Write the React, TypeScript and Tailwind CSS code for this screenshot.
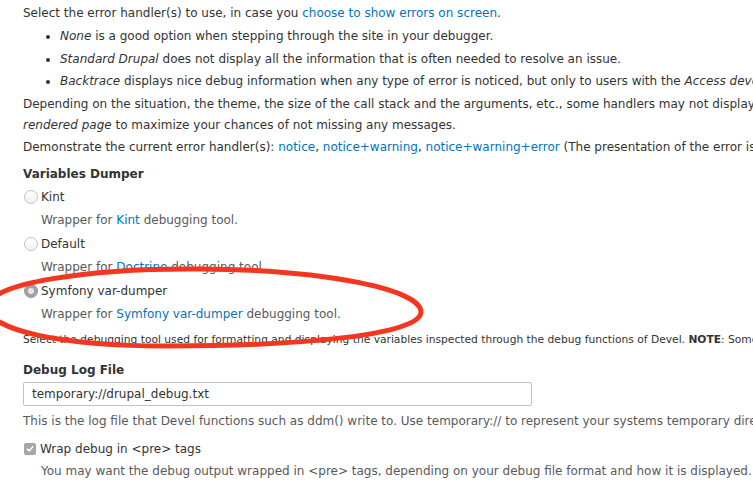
import React from "react"

const link = "text-[#0074bd]"

const Radio = ({ checked }: { checked?: boolean }) =>
  checked ? (
    <span className="w-[14px] h-[14px] rounded-full bg-[#a3a3a3] border border-[#9a9a9a] flex items-center justify-center shrink-0">
      <span className="w-[6px] h-[6px] rounded-full bg-[#e6e6e6]" />
    </span>
  ) : (
    <span className="w-[14px] h-[14px] rounded-full bg-gradient-to-b from-white to-[#f0f0f0] border border-[#c4c4c4] shrink-0" />
  )

const Checkbox = () => (
  <span className="w-[12px] h-[12px] rounded-[2px] bg-[#a6a6a6] flex items-center justify-center shrink-0">
    <svg width="8" height="8" viewBox="0 0 8 8">
      <path d="M1.3 4.2 L3.2 6 L6.8 1.8" fill="none" stroke="#fff" strokeWidth="1.6" strokeLinecap="round" strokeLinejoin="round" />
    </svg>
  </span>
)

const Option = ({ label, tool, checked }: { label: string; tool: string; checked?: boolean }) => (
  <div>
    <div className="flex items-center h-[22px] pl-[1px] gap-[3px] text-[#333]">
      <Radio checked={checked} />
      <span>{label}</span>
    </div>
    <div className="pl-[18px] mt-[1px] leading-[22px] text-[#595959]">
      Wrapper for <span className={link}>{tool}</span> debugging tool.
    </div>
  </div>
)

export default function App() {
  return (
    <div
      className="relative w-[753px] h-[483px] overflow-hidden bg-white text-[12px] text-[#333]"
      style={{ fontFamily: '"DejaVu Sans", Verdana, sans-serif' }}
    >
      <div className="w-[1100px] pl-[23px] pt-[2px] whitespace-nowrap">
        <p className="leading-[22px]">
          Select the error handler(s) to use, in case you <span className={link}>choose to show errors on screen</span>.
        </p>
        <ul className="list-disc pl-[37px] mt-[1px] leading-[22.5px]">
          <li>
            <em>None</em> is a good option when stepping through the site in your debugger.
          </li>
          <li>
            <em>Standard Drupal</em> does not display all the information that is often needed to resolve an issue.
          </li>
          <li>
            <em>Backtrace</em> displays nice debug information when any type of error is noticed, but only to users with the{" "}
            <em>Access devel information</em> permission.
          </li>
        </ul>
        <p className="leading-[21.5px] mt-[1px]">
          Depending on the situation, the theme, the size of the call stack and the arguments, etc., some handlers may not display their messages, or display them on the subsequent page. Select <em>Standard Drupal</em> to view all messages on the
          <br />
          <em>rendered page</em> to maximize your chances of not missing any messages.
          <br />
          Demonstrate the current error handler(s): <span className={link}>notice</span>, <span className={link}>notice+warning</span>,{" "}
          <span className={link}>notice+warning+error</span> (The presentation of the error is determined by PHP.)
        </p>

        <h3 className="font-bold leading-[22px] mt-[5px]">Variables Dumper</h3>
        <div className="mt-[1px] flex flex-col gap-[2px]">
          <Option label="Kint" tool="Kint" />
          <Option label="Default" tool="Doctrine" />
          <Option label="Symfony var-dumper" tool="Symfony var-dumper" checked />
        </div>
        <p className="text-[10.7px] leading-[18px] mt-[6px] text-[#333]">
          Select the debugging tool used for formatting and displaying the variables inspected through the debug functions of Devel. <strong>NOTE</strong>: Some of these tools are not compatible with each other.
        </p>

        <h3 className="font-bold leading-[22px] mt-[10px]">Debug Log File</h3>
        <div className="mt-[1px] w-[509px] h-[24px] border border-[#c2c2c2] rounded-[2px] flex items-center pl-[8px] text-[#333]">
          temporary://drupal_debug.txt
        </div>
        <p className="leading-[22px] mt-[4px] text-[#595959]">
          This is the log file that Devel functions such as ddm() write to. Use temporary:// to represent your systems temporary directory.
        </p>

        <div className="flex items-center gap-[4px] h-[22px] mt-[6px] pl-[1px]">
          <Checkbox />
          <span>Wrap debug in &lt;pre&gt; tags</span>
        </div>
        <p className="leading-[22px] pl-[18px] text-[#595959]">
          You may want the debug output wrapped in &lt;pre&gt; tags, depending on your debug file format and how it is displayed.
        </p>
      </div>

      <svg className="absolute inset-0 pointer-events-none" width="753" height="483" viewBox="0 0 753 483">
        <path
          d="M -12 307 C -12 283, 90 268, 200 269 C 330 270, 421 290, 421 312 C 421 335, 300 346, 167 346 C 60 346, -12 330, -12 307 Z"
          fill="none"
          stroke="#f2361f"
          strokeWidth="5"
        />
      </svg>
    </div>
  )
}
